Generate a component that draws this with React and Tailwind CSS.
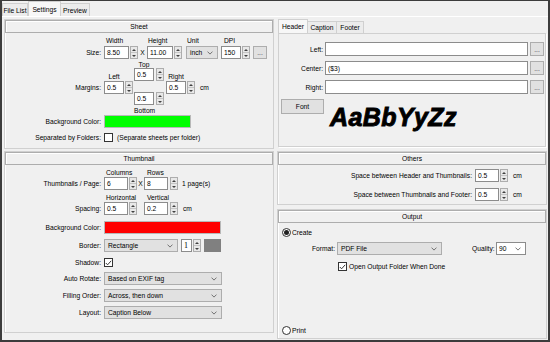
const Spin = ({ className = '' }) => (
  <div className={`flex h-[13px] w-[8px] shrink-0 flex-col border border-[#adadad] bg-[#e8e8e8] ${className}`}>
    <div className="flex flex-1 items-center justify-center">
      <svg width="4" height="2" viewBox="0 0 4 2"><path d="M0 2L2 0L4 2Z" fill="#404040" /></svg>
    </div>
    <div className="h-px bg-[#c4c4c4]" />
    <div className="flex flex-1 items-center justify-center">
      <svg width="4" height="2" viewBox="0 0 4 2"><path d="M0 0L4 0L2 2Z" fill="#404040" /></svg>
    </div>
  </div>
)

const Box = ({ className = '', children }) => (
  <div className={`flex h-[13px] shrink-0 items-center border border-[#8c8c8c] bg-white pl-[2px] ${className}`}>
    {children}
  </div>
)

const Chevron = () => (
  <svg width="6" height="4" viewBox="0 0 6 4">
    <path d="M0.5 0.6L3 3.1L5.5 0.6" fill="none" stroke="#555" strokeWidth="0.8" />
  </svg>
)

const Select = ({ className = '', children }) => (
  <div className={`flex h-[13px] shrink-0 items-center justify-between border border-[#adadad] bg-[#e1e1e1] pl-[3px] pr-[4px] ${className}`}>
    <span>{children}</span>
    <Chevron />
  </div>
)

const Dots = ({ className = '' }) => (
  <div className={`flex h-[13px] w-[14px] shrink-0 items-end justify-center border border-[#adadad] bg-[#e1e1e1] pb-[2px] text-[#444] ${className}`}>
    ...
  </div>
)

const Check = ({ checked }) => (
  <div className="flex h-[9px] w-[9px] shrink-0 items-center justify-center border border-[#333] bg-white">
    {checked && (
      <svg width="7" height="6" viewBox="0 0 7 6">
        <path d="M0.8 3L2.6 4.8L6.2 0.8" fill="none" stroke="#222" strokeWidth="0.9" />
      </svg>
    )}
  </div>
)

const Radio = ({ on }) => (
  <div className="flex h-[9px] w-[9px] shrink-0 items-center justify-center rounded-full border border-[#333] bg-white">
    {on && <div className="h-[5px] w-[5px] rounded-full bg-[#222]" />}
  </div>
)

const Group = ({ title, className = '', children }) => (
  <div className={`flex flex-col border border-[#d0d0d0] shadow-[inset_1px_1px_0_#fff] ${className}`}>
    <div className="flex h-[13px] shrink-0 items-center justify-center border border-[#adadad] shadow-[inset_1px_1px_0_#fff]">
      {title}
    </div>
    {children}
  </div>
)

const Lbl = ({ className = '', children }) => (
  <div className={`w-[99px] shrink-0 pr-[3px] text-right ${className}`}>{children}</div>
)

const Swatch = ({ className = '' }) => (
  <div className={`h-[13px] shrink-0 border border-[#b8b8b8] ${className}`} />
)

const Sheet = () => (
  <Group title="Sheet" className="h-[130px]">
    <div className="ml-[99px] mt-[4px] flex h-[7px]">
      <div className="w-[43px] pl-[2px]">Width</div>
      <div className="w-[39px] pl-[1px]">Height</div>
      <div className="w-[35px] pl-[1px]">Unit</div>
      <div className="pl-[3px]">DPI</div>
    </div>
    <div className="mt-[2px] flex items-center">
      <Lbl>Size:</Lbl>
      <Box className="w-[25px]">8.50</Box>
      <Spin className="ml-[1px]" />
      <div className="w-[9px] text-center">X</div>
      <Box className="w-[26px]">11.00</Box>
      <Spin className="ml-[1px]" />
      <Select className="ml-[4px] w-[32px]">inch</Select>
      <Box className="ml-[3px] w-[20px]">150</Box>
      <Spin className="ml-[1px]" />
      <Dots className="ml-[3px]" />
    </div>
    <div className="mt-[2px] flex items-start">
      <Lbl className="pt-[23px]">Margins:</Lbl>
      <div className="flex flex-col">
        <div className="mt-[12px] h-[7px] w-[20px] text-center">Left</div>
        <div className="mt-[1px] flex">
          <Box className="w-[20px]">0.5</Box>
          <Spin className="ml-[1px]" />
        </div>
      </div>
      <div className="ml-[1px] flex flex-col">
        <div className="h-[7px] w-[20px] text-center">Top</div>
        <div className="flex">
          <Box className="w-[20px]">0.5</Box>
          <Spin className="ml-[2px]" />
        </div>
        <div className="mt-[11px] flex">
          <Box className="w-[20px]">0.5</Box>
          <Spin className="ml-[2px]" />
        </div>
        <div className="mt-[2px] h-[7px] w-[20px] text-center">Bottom</div>
      </div>
      <div className="ml-[2px] flex flex-col">
        <div className="mt-[12px] h-[7px] w-[20px] text-center">Right</div>
        <div className="mt-[1px] flex items-center">
          <Box className="w-[20px]">0.5</Box>
          <Spin className="ml-[1px]" />
          <span className="ml-[5px]">cm</span>
        </div>
      </div>
    </div>
    <div className="mt-[1px] flex items-center">
      <Lbl>Background Color:</Lbl>
      <Swatch className="w-[87px] bg-[#00ff00]" />
    </div>
    <div className="mt-[3px] flex h-[13px] items-center">
      <Lbl>Separated by Folders:</Lbl>
      <Check />
      <span className="ml-[4px]">(Separate sheets per folder)</span>
    </div>
  </Group>
)

const Thumbnail = () => (
  <Group title="Thumbnail" className="mt-[2px] h-[182px]">
    <div className="ml-[99px] mt-[4px] flex h-[7px]">
      <div className="w-[40px] pl-[2px]">Columns</div>
      <div className="pl-[3px]">Rows</div>
    </div>
    <div className="mt-[1px] flex items-center">
      <Lbl>Thumbnails / Page:</Lbl>
      <Box className="w-[24px]">6</Box>
      <Spin className="ml-[1px]" />
      <div className="w-[7px] text-center">X</div>
      <Box className="w-[24px]">8</Box>
      <Spin className="ml-[2px]" />
      <span className="ml-[4px]">1 page(s)</span>
    </div>
    <div className="ml-[99px] mt-[4px] flex h-[7px]">
      <div className="w-[40px] pl-[2px]">Horizontal</div>
      <div className="pl-[3px]">Vertical</div>
    </div>
    <div className="mt-[1px] flex items-center">
      <Lbl>Spacing:</Lbl>
      <Box className="w-[24px]">0.5</Box>
      <Spin className="ml-[1px]" />
      <Box className="ml-[7px] w-[24px]">0.2</Box>
      <Spin className="ml-[2px]" />
      <span className="ml-[5px]">cm</span>
    </div>
    <div className="mt-[6px] flex items-center">
      <Lbl>Background Color:</Lbl>
      <Swatch className="w-[117px] bg-[#ff0000]" />
    </div>
    <div className="mt-[5px] flex items-center">
      <Lbl>Border:</Lbl>
      <Select className="w-[74px]">Rectangle</Select>
      <Box className="ml-[3px] w-[11px] font-['Liberation_Serif',serif] text-[8px]">1</Box>
      <Spin className="ml-[1px]" />
      <div className="ml-[3px] h-[13px] w-[17px] bg-[#808080]" />
    </div>
    <div className="mt-[4px] flex h-[13px] items-center">
      <Lbl>Shadow:</Lbl>
      <Check checked />
    </div>
    <div className="mt-[3px] flex items-center">
      <Lbl>Auto Rotate:</Lbl>
      <Select className="w-[118px]">Based on EXIF tag</Select>
    </div>
    <div className="mt-[4px] flex items-center">
      <Lbl>Filling Order:</Lbl>
      <Select className="w-[118px]">Across, then down</Select>
    </div>
    <div className="mt-[4px] flex items-center">
      <Lbl>Layout:</Lbl>
      <Select className="w-[118px]">Caption Below</Select>
    </div>
  </Group>
)

const TextRow = ({ label, value, className = '' }) => (
  <div className={`flex items-center ${className}`}>
    <div className="w-[46px] shrink-0 pr-[2px] text-right">{label}</div>
    <Box className="h-[14px] w-[203px]">{value}</Box>
    <Dots className="ml-[2px] h-[14px] w-[13px]" />
  </div>
)

const HeaderPanel = () => (
  <div>
    <div className="flex h-[14px] items-end whitespace-nowrap pl-[1px]">
      <div className="flex h-[14px] w-[30px] items-center justify-center border border-b-0 border-[#d0d0d0] bg-[#f7f7f7]">Header</div>
      <div className="flex h-[12px] w-[29px] items-center justify-center border border-b-0 border-l-0 border-[#d0d0d0] bg-[#ececec]">Caption</div>
      <div className="flex h-[12px] w-[27px] items-center justify-center border border-b-0 border-l-0 border-[#d0d0d0] bg-[#ececec]">Footer</div>
    </div>
    <div className="ml-[1px] h-[114px] w-[268px] border border-[#d0d0d0] pt-[8px] shadow-[1px_1px_0_#fff]">
      <TextRow label="Left:" value="" />
      <TextRow label="Center:" value="($3)" className="mt-[5px]" />
      <TextRow label="Right:" value="" className="mt-[5px]" />
      <div className="mt-[5px] flex items-start">
        <div className="ml-[2px] flex h-[15px] w-[43px] items-start justify-center border border-[#adadad] bg-[#e1e1e1] pt-[3px]">
          Font
        </div>
        <div className="ml-[6px] mt-[6px] text-[25px] font-bold italic leading-none tracking-[0.4px] [-webkit-text-stroke:0.9px_#000]">
          AaBbYyZz
        </div>
      </div>
    </div>
  </div>
)

const SpaceRow = ({ label, className = '' }) => (
  <div className={`flex items-center ${className}`}>
    <div className="w-[197px] shrink-0 pr-[3px] text-right">{label}</div>
    <Box className="w-[24px]">0.5</Box>
    <Spin className="ml-[1px]" />
    <span className="ml-[5px]">cm</span>
  </div>
)

const Others = () => (
  <Group title="Others" className="mt-[4px] h-[54px]">
    <SpaceRow label="Space between Header and Thumbnails:" className="mt-[4px]" />
    <SpaceRow label="Space between Thumbnails and Footer:" className="mt-[6px]" />
  </Group>
)

const Output = () => (
  <Group title="Output" className="mt-[4px] h-[130px] pb-[3px]">
    <div className="mt-[5px] flex items-center pl-[4px]">
      <Radio on />
      <span className="ml-[1px]">Create</span>
    </div>
    <div className="mt-[5px] flex items-center pl-[34px]">
      <div className="w-[25px]">Format:</div>
      <Select className="h-[12px] w-[105px]">PDF File</Select>
      <div className="ml-[30px] w-[24px]">Quality:</div>
      <Box className="h-[12px] w-[30px] justify-between pr-[4px]">
        <span>90</span>
        <Chevron />
      </Box>
    </div>
    <div className="mt-[7px] flex items-center pl-[60px]">
      <Check checked />
      <span className="ml-[2px]">Open Output Folder When Done</span>
    </div>
    <div className="flex-1" />
    <div className="flex items-center pl-[4px]">
      <Radio />
      <span className="ml-[1px]">Print</span>
    </div>
  </Group>
)

const App = () => {
  return (
    <div className="h-[342px] w-[550px] overflow-hidden border-x-2 border-b-2 border-t border-[#3c3c3c] bg-[#f0f0f0] font-['Liberation_Sans',Arial,sans-serif] text-[6.7px] leading-[7px] text-black">
      <div className="flex h-[15px] items-end whitespace-nowrap">
        <div className="flex h-[13px] w-[26px] items-center justify-center border border-b-0 border-[#d0d0d0] bg-[#ececec]">File List</div>
        <div className="flex h-[15px] w-[33px] items-center justify-center border border-b-0 border-[#d0d0d0] bg-[#f7f7f7]">Settings</div>
        <div className="flex h-[13px] w-[29px] items-center justify-center border border-b-0 border-l-0 border-[#d0d0d0] bg-[#ececec]">Preview</div>
      </div>
      <div className="flex gap-[3px] border-t border-white pl-[2px] pt-[2px]">
        <div className="flex w-[270px] flex-col">
          <Sheet />
          <Thumbnail />
        </div>
        <div className="flex w-[270px] flex-col">
          <HeaderPanel />
          <Others />
          <Output />
        </div>
      </div>
    </div>
  )
}

export default App
